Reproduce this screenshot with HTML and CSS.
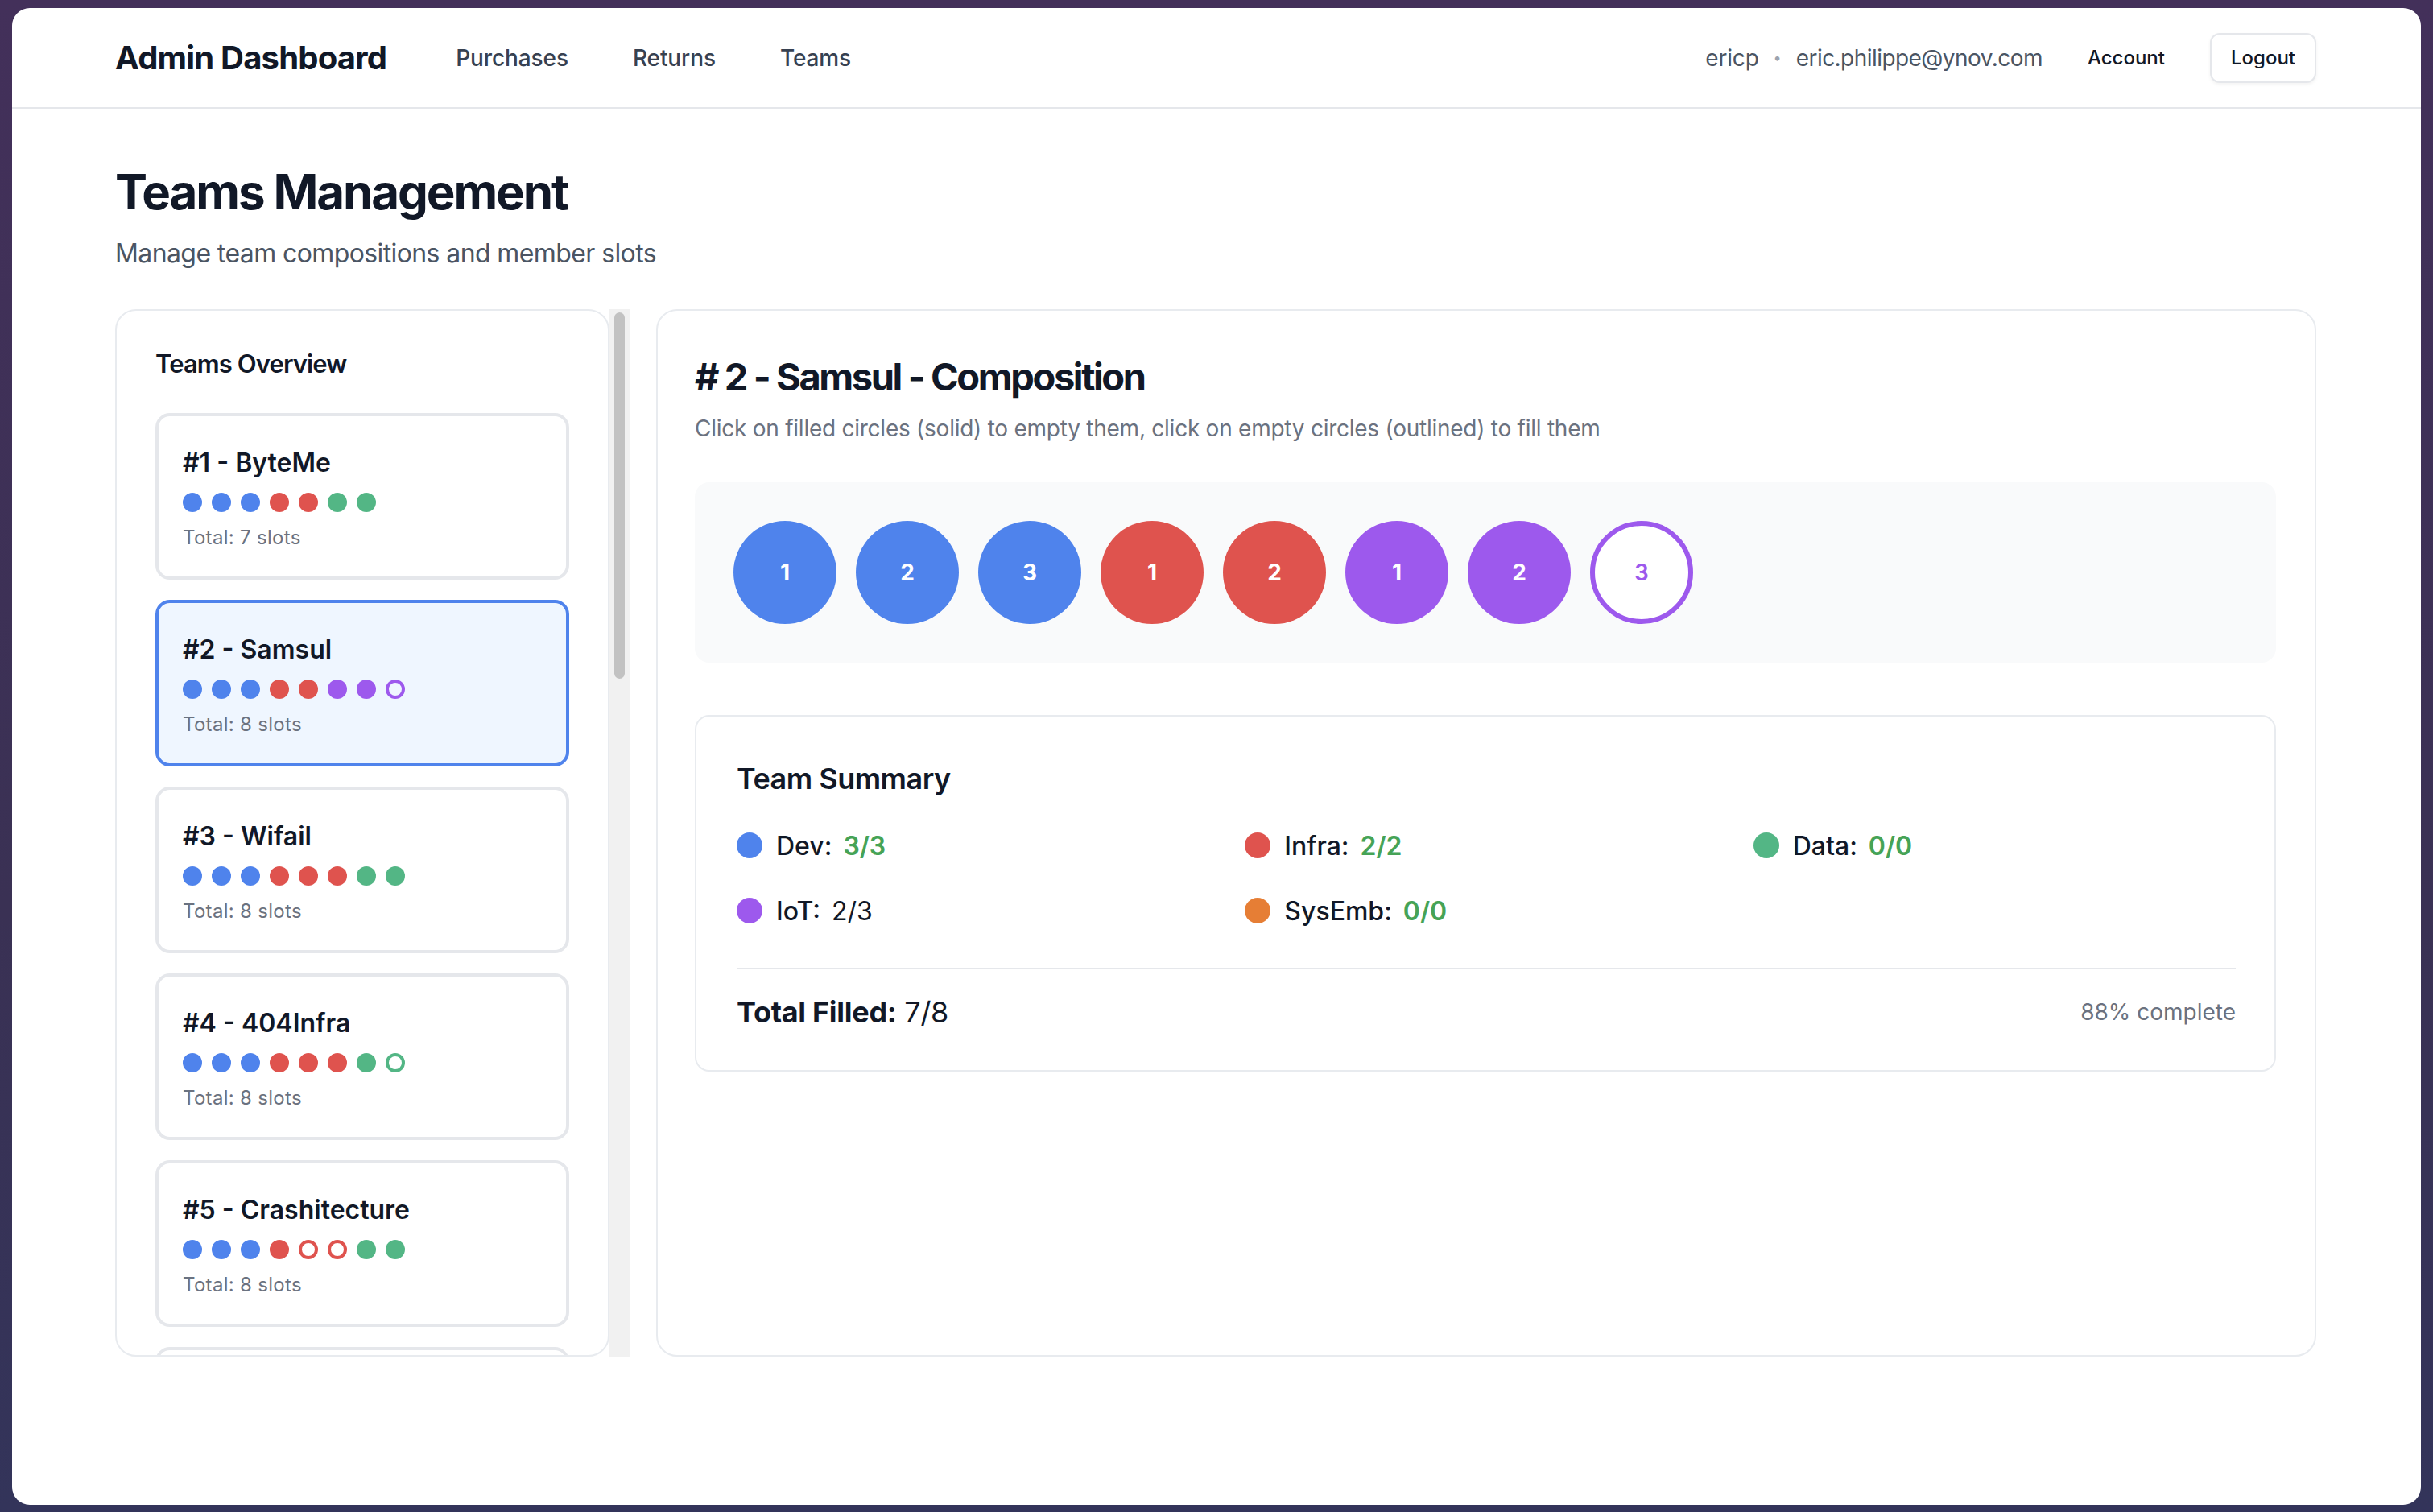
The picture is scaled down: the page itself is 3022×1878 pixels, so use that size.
FILE: index.html
```html
<!DOCTYPE html>
<html lang="en">
<head>
<meta charset="utf-8">
<title>Admin Dashboard - Teams</title>
<link rel="stylesheet" href="styles.css">
</head>
<body>
<div class="window">
  <header class="nav">
    <div class="nav-left">
      <span class="brand">Admin Dashboard</span>
      <a class="nav-link">Purchases</a>
      <a class="nav-link">Returns</a>
      <a class="nav-link">Teams</a>
    </div>
    <div class="nav-right">
      <span class="user">ericp</span>
      <span class="sep">•</span>
      <span class="user email">eric.philippe@ynov.com</span>
      <a class="account">Account</a>
      <button class="logout">Logout</button>
    </div>
  </header>

  <main class="page">
    <h1 class="title">Teams Management</h1>
    <p class="subtitle">Manage team compositions and member slots</p>

    <div class="panels">
      <div class="list-wrap">
        <section class="list-panel">
          <h2 class="list-title">Teams Overview</h2>
          <div class="cards">
            <div class="team-card">
              <div class="team-name">#1 - ByteMe</div>
              <div class="dots">
                <span class="dot blue"></span><span class="dot blue"></span><span class="dot blue"></span>
                <span class="dot red"></span><span class="dot red"></span>
                <span class="dot green"></span><span class="dot green"></span>
              </div>
              <div class="team-total">Total: 7 slots</div>
            </div>
            <div class="team-card selected">
              <div class="team-name">#2 - Samsul</div>
              <div class="dots">
                <span class="dot blue"></span><span class="dot blue"></span><span class="dot blue"></span>
                <span class="dot red"></span><span class="dot red"></span>
                <span class="dot purple"></span><span class="dot purple"></span><span class="dot purple empty"></span>
              </div>
              <div class="team-total">Total: 8 slots</div>
            </div>
            <div class="team-card">
              <div class="team-name">#3 - Wifail</div>
              <div class="dots">
                <span class="dot blue"></span><span class="dot blue"></span><span class="dot blue"></span>
                <span class="dot red"></span><span class="dot red"></span><span class="dot red"></span>
                <span class="dot green"></span><span class="dot green"></span>
              </div>
              <div class="team-total">Total: 8 slots</div>
            </div>
            <div class="team-card">
              <div class="team-name">#4 - 404Infra</div>
              <div class="dots">
                <span class="dot blue"></span><span class="dot blue"></span><span class="dot blue"></span>
                <span class="dot red"></span><span class="dot red"></span><span class="dot red"></span>
                <span class="dot green"></span><span class="dot green empty"></span>
              </div>
              <div class="team-total">Total: 8 slots</div>
            </div>
            <div class="team-card">
              <div class="team-name">#5 - Crashitecture</div>
              <div class="dots">
                <span class="dot blue"></span><span class="dot blue"></span><span class="dot blue"></span>
                <span class="dot red"></span><span class="dot red empty"></span><span class="dot red empty"></span>
                <span class="dot green"></span><span class="dot green"></span>
              </div>
              <div class="team-total">Total: 8 slots</div>
            </div>
            <div class="team-card"></div>
          </div>
        </section>
        <div class="scrollbar"><div class="thumb"></div></div>
      </div>

      <section class="detail-panel">
        <h2 class="detail-title"># 2 - Samsul - Composition</h2>
        <p class="detail-help">Click on filled circles (solid) to empty them, click on empty circles (outlined) to fill them</p>

        <div class="slots">
          <button class="slot blue">1</button>
          <button class="slot blue">2</button>
          <button class="slot blue">3</button>
          <button class="slot red">1</button>
          <button class="slot red">2</button>
          <button class="slot purple">1</button>
          <button class="slot purple">2</button>
          <button class="slot purple empty">3</button>
        </div>

        <div class="summary">
          <h3 class="summary-title">Team Summary</h3>
          <div class="summary-grid">
            <div class="stat"><span class="sdot blue"></span><span class="label">Dev:</span><span class="value ok">3/3</span></div>
            <div class="stat"><span class="sdot red"></span><span class="label">Infra:</span><span class="value ok">2/2</span></div>
            <div class="stat"><span class="sdot green"></span><span class="label">Data:</span><span class="value ok">0/0</span></div>
            <div class="stat"><span class="sdot purple"></span><span class="label">IoT:</span><span class="value">2/3</span></div>
            <div class="stat"><span class="sdot orange"></span><span class="label">SysEmb:</span><span class="value ok">0/0</span></div>
          </div>
          <div class="summary-foot">
            <div class="total"><strong>Total Filled:</strong> 7/8</div>
            <div class="percent">88% complete</div>
          </div>
        </div>
      </section>
    </div>
  </main>
</div>
</body>
</html>
```

FILE: styles.css
```css
* { box-sizing: border-box; }

html, body {
  margin: 0;
  padding: 0;
}

body {
  width: 3022px;
  height: 1878px;
  background: linear-gradient(180deg, #43305a 0%, #3a3154 60%, #33345a 100%);
  font-family: "Inter", "Noto Sans", sans-serif;
  color: #111827;
  padding: 10px 15px 9px 15px;
  overflow: hidden;
}

.window {
  height: 1859px;
  background: #ffffff;
  border-radius: 22px;
  overflow: hidden;
}

/* Nav */
.nav {
  height: 125px;
  border-bottom: 2px solid #e5e7eb;
  padding: 0 130px 0 128px;
  display: flex;
  align-items: center;
  justify-content: space-between;
}

.nav-left {
  display: flex;
  align-items: center;
}

.brand {
  font-size: 40px;
  font-weight: 700;
  letter-spacing: -0.8px;
  color: #111827;
  margin-right: 86px;
}

.nav-link {
  font-size: 28px;
  font-weight: 500;
  letter-spacing: -0.1px;
  color: #374151;
  margin-right: 80px;
}

.nav-right {
  display: flex;
  align-items: center;
}

.user {
  font-size: 28px;
  color: #4b5563;
  letter-spacing: -0.2px;
}

.user.email {
  letter-spacing: -0.55px;
}

.sep {
  font-size: 18px;
  color: #9ca3af;
  margin: 0 18px;
}

.account {
  font-size: 24px;
  font-weight: 500;
  color: #111827;
  margin-left: 56px;
  margin-right: 56px;
}

.logout {
  font-family: inherit;
  font-size: 24px;
  font-weight: 500;
  color: #111827;
  background: #ffffff;
  border: 2px solid #e5e7eb;
  border-radius: 12px;
  height: 62px;
  padding: 0 24px;
  box-shadow: 0 2px 4px rgba(0, 0, 0, 0.05);
}

/* Page */
.page {
  padding: 66px 130px 0 128px;
}

.title {
  margin: 0;
  font-size: 60px;
  line-height: 74px;
  font-weight: 700;
  letter-spacing: -2.1px;
  color: #111827;
}

.subtitle {
  margin: 16px 0 0;
  font-size: 32px;
  line-height: 48px;
  letter-spacing: -0.6px;
  color: #4b5563;
}

.panels {
  margin-top: 45px;
  display: flex;
  gap: 33px;
  height: 1301px;
}

/* Left list */
.list-wrap {
  display: flex;
  flex: 0 0 639px;
}

.list-panel {
  flex: 0 0 614px;
  border: 2px solid #e8ebef;
  border-radius: 26px;
  padding: 42px 48px 0;
  overflow: hidden;
  background: #ffffff;
}

.list-title {
  margin: 0;
  font-size: 31px;
  line-height: 48px;
  font-weight: 600;
  letter-spacing: -0.9px;
  color: #111827;
}

.cards {
  margin-top: 37px;
  display: flex;
  flex-direction: column;
  gap: 25px;
}

.team-card {
  border: 4px solid #e5e7eb;
  border-radius: 18px;
  padding: 34px 28px 30px 30px;
  background: #ffffff;
  height: 207px;
  flex: 0 0 auto;
}

.team-card.selected {
  border-color: #4f83ec;
  background: #eff6ff;
}

.team-name {
  font-size: 32px;
  line-height: 48px;
  font-weight: 600;
  color: #111827;
}

.dots {
  margin-top: 13px;
  display: flex;
  gap: 12px;
}

.dot {
  width: 24px;
  height: 24px;
  border-radius: 50%;
}

.dot.blue { background: #4f83ec; }
.dot.red { background: #df534e; }
.dot.green { background: #53b685; }
.dot.purple { background: #9d59ed; }

.dot.empty { background: transparent; border: 4px solid; }
.dot.red.empty { border-color: #df534e; }
.dot.green.empty { border-color: #53b685; }
.dot.purple.empty { border-color: #9d59ed; }

.team-total {
  margin-top: 15px;
  font-size: 24px;
  line-height: 34px;
  color: #6b7280;
  letter-spacing: 0.3px;
}

.scrollbar {
  flex: 0 0 25px;
  background: #f1f1f1;
  padding: 4px 6px;
}

.thumb {
  height: 455px;
  background: #c2c2c2;
  border-radius: 7px;
}

/* Right detail */
.detail-panel {
  flex: 1;
  border: 2px solid #e8ebef;
  border-radius: 26px;
  padding: 50px 48px 48px 46px;
  background: #ffffff;
}

.detail-title {
  margin: 0;
  font-size: 47px;
  line-height: 64px;
  font-weight: 700;
  letter-spacing: -2.4px;
  color: #111827;
}

.detail-help {
  margin: 12px 0 0;
  font-size: 28px;
  line-height: 40px;
  letter-spacing: -0.25px;
  color: #6b7280;
}

.slots {
  margin-top: 47px;
  background: #f9fafb;
  border-radius: 18px;
  padding: 48px;
  display: flex;
  gap: 24px;
}

.slot {
  width: 128px;
  height: 128px;
  border-radius: 50%;
  border: none;
  padding: 0;
  font-family: inherit;
  font-size: 28px;
  font-weight: 700;
  color: #ffffff;
  display: flex;
  align-items: center;
  justify-content: center;
}

.slot.blue { background: #4f83ec; }
.slot.red { background: #df534e; }
.slot.purple { background: #9d59ed; }

.slot.empty {
  background: #ffffff;
  border: 6px solid #9d59ed;
  color: #9d59ed;
  font-weight: 600;
}

/* Summary */
.summary {
  margin-top: 65px;
  border: 2px solid #e8ebef;
  border-radius: 18px;
  padding: 49px 48px 44px 50px;
}

.summary-title {
  margin: 0;
  font-size: 36px;
  line-height: 56px;
  font-weight: 600;
  letter-spacing: -0.5px;
  color: #111827;
}

.summary-grid {
  margin-top: 31px;
  display: grid;
  grid-template-columns: repeat(3, 1fr);
  row-gap: 33px;
  column-gap: 32px;
}

.stat {
  display: flex;
  align-items: center;
  height: 48px;
  font-size: 32px;
}

.sdot {
  width: 32px;
  height: 32px;
  border-radius: 50%;
  margin-right: 17px;
  flex: 0 0 32px;
}

.sdot.blue { background: #4f83ec; }
.sdot.red { background: #df534e; }
.sdot.green { background: #53b685; }
.sdot.purple { background: #9d59ed; }
.sdot.orange { background: #e67e35; }

.label {
  font-weight: 500;
  color: #111827;
  margin-right: 14px;
}

.value {
  color: #111827;
}

.value.ok {
  color: #46a356;
  font-weight: 600;
}

.summary-foot {
  margin-top: 47px;
  border-top: 2px solid #e5e7eb;
  padding-top: 25px;
  display: flex;
  align-items: center;
  justify-content: space-between;
}

.total {
  font-size: 36px;
  line-height: 56px;
  color: #111827;
  letter-spacing: -0.3px;
}

.total strong {
  font-weight: 700;
}

.percent {
  font-size: 28px;
  color: #6b7280;
}
```
